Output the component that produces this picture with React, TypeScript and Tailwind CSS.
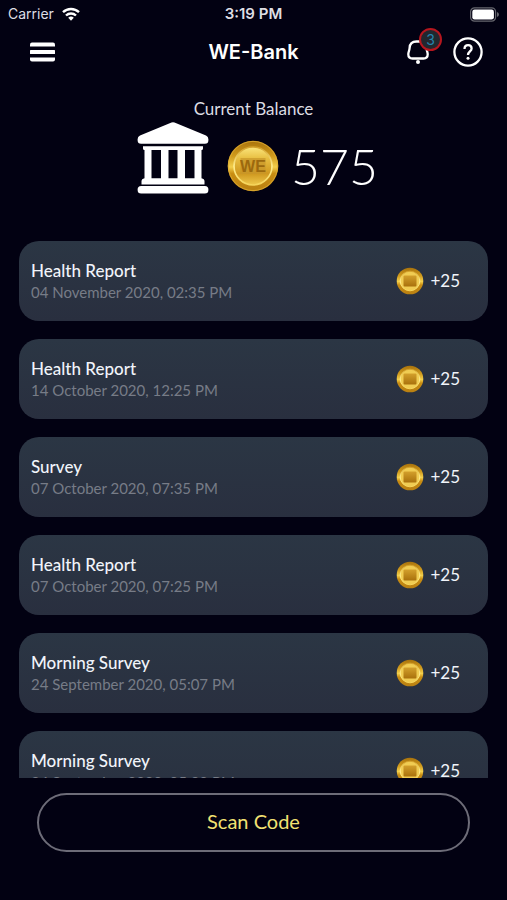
import React from "react";

interface Transaction {
    id: number;
    title: string;
    date: string;
    amount: number;
}

const transactions: Transaction[] = [
    {id: 1, title: "Health Report", date: "04 November 2020, 02:35 PM", amount: 25},
    {id: 2, title: "Health Report", date: "14 October 2020, 12:25 PM", amount: 25},
    {id: 3, title: "Survey", date: "07 October 2020, 07:35 PM", amount: 25},
    {id: 4, title: "Health Report", date: "07 October 2020, 07:25 PM", amount: 25},
    {id: 5, title: "Morning Survey", date: "24 September 2020, 05:07 PM", amount: 25},
    {id: 6, title: "Morning Survey", date: "24 September 2020, 05:00 PM", amount: 25},
];

const CoinGradients: React.FC = () => (
    <svg width="0" height="0" className="absolute" aria-hidden="true">
        <defs>
            <linearGradient id="coinRim" x1="0" y1="0" x2="0" y2="1">
                <stop offset="0" stopColor="#a8720c"/>
                <stop offset="0.3" stopColor="#d09a1c"/>
                <stop offset="0.52" stopColor="#f3cf4c"/>
                <stop offset="0.65" stopColor="#c98d12"/>
                <stop offset="1" stopColor="#b98012"/>
            </linearGradient>
            <linearGradient id="coinRing" x1="0" y1="0" x2="0" y2="1">
                <stop offset="0" stopColor="#d3a02a"/>
                <stop offset="0.5" stopColor="#ffee90"/>
                <stop offset="1" stopColor="#f5d45a"/>
            </linearGradient>
            <linearGradient id="coinFace" x1="0" y1="0" x2="0" y2="1">
                <stop offset="0" stopColor="#fae57c"/>
                <stop offset="0.3" stopColor="#e8bf42"/>
                <stop offset="0.7" stopColor="#cf981f"/>
                <stop offset="1" stopColor="#efc94c"/>
            </linearGradient>
            <linearGradient id="coinMark" x1="0" y1="0" x2="0" y2="1">
                <stop offset="0" stopColor="#d3a02c"/>
                <stop offset="1" stopColor="#a9710c"/>
            </linearGradient>
        </defs>
    </svg>
);

const Coin: React.FC = () => (
    <svg viewBox="0 0 52 52" className="size-13 shrink-0" aria-hidden="true">
        <circle cx="26" cy="26" r="25.3" fill="url(#coinRim)"/>
        <circle cx="26" cy="26" r="24.6" fill="none" stroke="#e0ae35" strokeWidth="0.8"/>
        <circle cx="26" cy="26" r="19" fill="url(#coinFace)" stroke="url(#coinRing)" strokeWidth="1.6"/>
        <rect x="13.5" y="18" width="25" height="16" fill="#c8962a" opacity="0.7"/>
        <text
            x="26"
            y="32"
            textAnchor="middle"
            fill="#9c690e"
            className="font-['Liberation_Sans',sans-serif] text-[16px] font-bold"
        >
            WE
        </text>
    </svg>
);

const SmallCoin: React.FC = () => (
    <svg viewBox="0 0 28 28" className="size-7 shrink-0" aria-hidden="true">
        <circle cx="14" cy="14" r="13.3" fill="url(#coinRim)"/>
        <circle cx="14" cy="14" r="9.8" fill="#f0cc52" stroke="url(#coinRing)" strokeWidth="1"/>
        <rect x="7.5" y="8.5" width="13" height="11" rx="1" fill="url(#coinMark)"/>
    </svg>
);

const BankIcon: React.FC = () => (
    <svg viewBox="0 0 72 72" className="size-18 shrink-0" fill="#fff" aria-hidden="true">
        <path d="M34.5 0.6a4 4 0 0 1 3 0L69 13.6a4 4 0 0 1 2.4 3.7v0.9a3.5 3.5 0 0 1-3.5 3.5H4.1a3.5 3.5 0 0 1-3.5-3.5v-0.9A4 4 0 0 1 3 13.6z"/>
        <path
            d="M6 24.2h60v2.2q0 1.5-1.5 1.5v28.3q3 0.5 3 3v3.3H4.5v-3.3q0-2.5 3-3V27.9Q6 27.9 6 26.4zM14.5 27.9v28.3h9.5V27.900zM31.5 27.9v28.3h9V27.900zM48 27.9v28.3h9.5V27.900z"
            fillRule="evenodd"
        />
        <rect x="0.6" y="64" width="70.8" height="7.6" rx="3.5"/>
    </svg>
);

const StatusBar: React.FC = () => (
    <div className="grid grid-cols-3 items-center h-7 px-2 font-['Inter',sans-serif] text-sm text-[#dedee4]">
        <div className="flex items-center gap-2">
            <span>Carrier</span>
            <svg viewBox="0 0 18 14" className="w-4.5 h-3.5" fill="none" stroke="#fff" strokeWidth="2.4" aria-hidden="true">
                <path d="M1 5.2a11.5 11.5 0 0 1 16 0"/>
                <path d="M4 8.5a7.2 7.2 0 0 1 10 0"/>
                <path d="M6.2 10.8a4 4 0 0 1 5.6 0L9 13.7z" fill="#fff" stroke="none"/>
            </svg>
        </div>
        <span className="text-center text-[15px] font-semibold">3:19 PM</span>
        <svg viewBox="0 0 29 15" className="w-[29px] h-[15px] justify-self-end" aria-hidden="true">
            <rect x="0.6" y="0.8" width="25" height="13.4" rx="4" fill="none" stroke="#66666e" strokeWidth="1.2"/>
            <rect x="2.3" y="2.5" width="21.6" height="10" rx="2.3" fill="#fff"/>
            <path d="M27 5v5q2-0.800 2-2.500t-2-2.500z" fill="#66666e"/>
        </svg>
    </div>
);

const Header: React.FC = () => (
    <header className="grid grid-cols-3 items-center h-12 px-6">
        <button type="button" aria-label="Menu" className="justify-self-start pl-1.5">
            <svg viewBox="0 0 25 20" className="w-[25px] h-5" fill="#fff" aria-hidden="true">
                <path d="M2 0.5h21q2 0 2 2v2H0v-2q0-2 2-2z"/>
                <rect y="8" width="25" height="4" rx="0.5"/>
                <path d="M0 15.5h25v2q0 2-2 2H2q-2 0-2-2z"/>
            </svg>
        </button>
        <h1 className="text-center font-['Inter',sans-serif] text-xl font-semibold whitespace-nowrap">WE-Bank</h1>
        <div className="flex items-center justify-end gap-6">
            <button type="button" aria-label="Notifications" className="relative">
                <svg viewBox="0 0 22 24" className="w-[22px] h-6" fill="none" aria-hidden="true">
                    <path
                        d="M9.500 1.500C5 1.500 2.800 4 2.600 8c-0.100 2.500-1.300 3.800-1.300 6.200 0 2.800 1.500 4.300 4.200 4.300h11c2.700 0 4.200-1.500 4.200-4.300 0-2.400-1.200-3.700-1.300-6.200-0.200-4-2.400-6.500-6.900-6.500z"
                        stroke="#fff"
                        strokeWidth="2.3"
                    />
                    <circle cx="11" cy="22" r="2" fill="#fff"/>
                </svg>
                <span
                    className="absolute -top-3 left-3 flex items-center justify-center size-[23px] rounded-full border-2 border-[#b5161e] bg-[#22272e] font-['Inter',sans-serif] text-sm text-[#2484ad]">
                    3
                </span>
            </button>
            <button type="button" aria-label="Help">
                <svg viewBox="0 0 30 30" className="size-[30px]" fill="none" stroke="#fff" strokeWidth="2.3" aria-hidden="true">
                    <circle cx="15" cy="15" r="13.6"/>
                    <path d="M11.500 12c0-2.400 1.500-3.900 3.600-3.900s3.500 1.500 3.500 3.400c0 2.900-3.600 3-3.600 6.500"/>
                    <circle cx="15" cy="21.300" r="1.500" fill="#fff" stroke="none"/>
                </svg>
            </button>
        </div>
    </header>
);

const TransactionCard: React.FC<{item: Transaction}> = ({item}) => (
    <li className="flex items-center justify-between shrink-0 h-20 pl-3 pr-7 rounded-[20px] bg-linear-to-b from-[#2b3644] to-[#292f3f]">
        <div className="pb-0.5">
            <h2 className="text-[17px] leading-6 font-medium text-[#f1f4fa]">{item.title}</h2>
            <p className="text-[15px] leading-[18px] text-[#777c87]">{item.date}</p>
        </div>
        <div className="flex items-center gap-1.5">
            <SmallCoin/>
            <span className="text-[17px] text-[#f1f4fa]">+{item.amount}</span>
        </div>
    </li>
);

const App: React.FC = () => {
    return (
        <div className="flex flex-col h-screen overflow-hidden bg-[#020112] font-['Lato',sans-serif] text-white">
            <CoinGradients/>
            <StatusBar/>
            <Header/>
            <section className="flex flex-col items-center pt-5 pb-[47px]">
                <p className="text-[17px] leading-[26px] text-[#dcdce3]">Current Balance</p>
                <div className="flex items-center gap-[18px] pl-2">
                    <BankIcon/>
                    <div className="flex items-center gap-3 pt-4">
                        <Coin/>
                        <span className="text-[50px] leading-13 font-light">575</span>
                    </div>
                </div>
            </section>
            <ul className="flex flex-col flex-1 min-h-0 gap-[18px] px-[19px] overflow-y-auto [scrollbar-width:none]">
                {transactions.map((item) => (
                    <TransactionCard key={item.id} item={item}/>
                ))}
            </ul>
            <footer className="px-[37px] pt-[15px] pb-12">
                <button
                    type="button"
                    className="w-full h-[59px] pb-1 rounded-full border-2 border-[#6d6c78] text-xl text-[#f2e272]"
                >
                    Scan Code
                </button>
            </footer>
        </div>
    );
};

export default App;
